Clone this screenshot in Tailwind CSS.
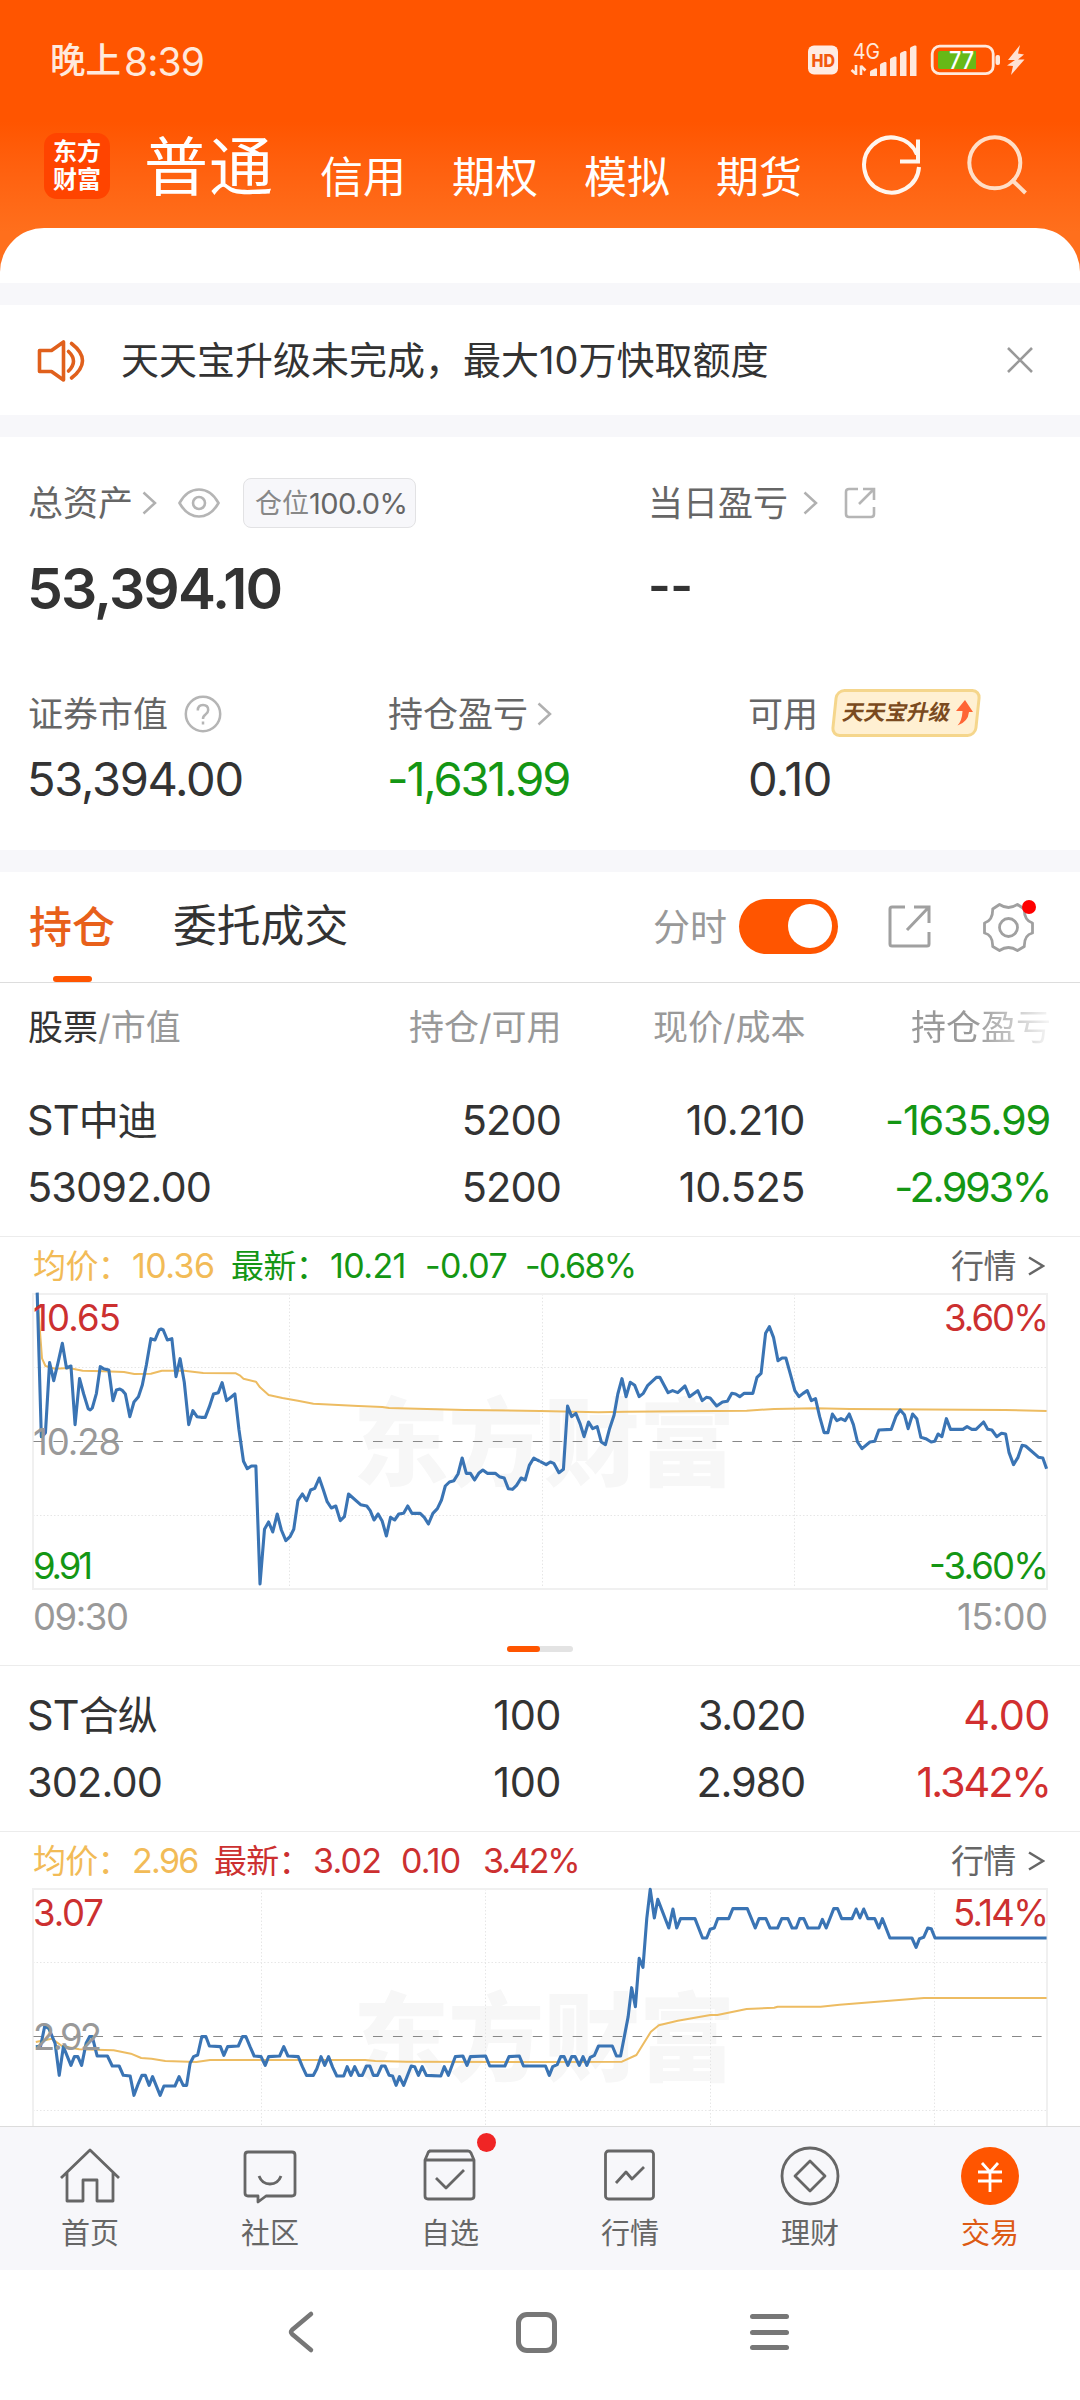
<!DOCTYPE html>
<html lang="zh-CN">
<head>
<meta charset="utf-8">
<title>交易</title>
<script src="https://cdn.jsdelivr.net/npm/@tailwindcss/browser@4"></script>
</head>
<body class="w-[1080px] h-[2400px] overflow-hidden bg-white text-[#333333] font-['Inter','Noto_Sans_CJK_SC',sans-serif] leading-none whitespace-nowrap">

<!-- header -->
<header class="h-[283px] bg-linear-to-b from-[#ff5500] from-[43%] to-[#ff6f1c] to-[82%]">
  <div class="h-[122px] flex items-center pl-[50px] text-[#ffe9dc]">
    <div class="flex items-center w-[758px]"><span class="text-[35.500px] font-medium">晚上</span><span class="text-[39px] tracking-[-0.9px] ml-[3px]">8:39</span></div>
    <svg class="w-[222px] h-[60px]" viewBox="808 32 222 60">
      <rect x="808" y="46.500" width="30" height="29" rx="6" fill="#ffece3"/>
      <text x="811.500" y="67.500" font-size="17.500" font-weight="800" fill="#f2590e" textLength="23.500" lengthAdjust="spacingAndGlyphs">HD</text>
      <text x="853" y="60" font-size="21.500" fill="#ffe9dc" textLength="27" lengthAdjust="spacingAndGlyphs">4G</text>
      <path d="M856 66v10M856 75l-4.500-4M861 76V66.500M861 67l4.500 4.500" stroke="#ffe9dc" stroke-width="2.600" fill="none"/>
      <path d="M870 77v-4q0-1 1-1.500l4-2q2-1 2 1v6.500zM880 77V66q0-1 1-1.500l3.500-1.500q2-.5 2 1v13zM890 77V60.500q0-1 1-1.500l3.500-1.500q2-.5 2 1v18.500zM900 77V55q0-1 1-1.500l3.500-1.500q2-.5 2 1v24zM910 77V49.500q0-1 1-1.500l3.500-1.500q2-.5 2 1v29.500z" fill="#ffe9dc"/>
      <rect x="932.200" y="47.200" width="61" height="27.500" rx="7.500" fill="none" stroke="#ffe9dc" stroke-width="2.800"/>
      <path d="M940 52h36v18h-36q-2 0-2-2V54q0-2 2-2z" fill="#66b917"/>
      <text x="949" y="69.800" font-size="24" font-weight="500" fill="#ffffff" textLength="25" lengthAdjust="spacingAndGlyphs">77</text>
      <rect x="995.500" y="56" width="4.500" height="10" rx="2" fill="#ffe9dc"/>
      <path d="M1020 46l-12 15h7l-8 5.500 6 .5-2 9 13.500-15.500h-6.500l6-5-6-1z" fill="#ffe1d2"/>
    </svg>
  </div>
  <div class="h-[106px] pb-[18px] flex items-center text-white">
    <div class="ml-[44px] w-[66px] h-[66px] rounded-[13px] bg-[#ff4400] flex flex-col items-center justify-center text-[24px] leading-[28px] font-bold"><span>东方</span><span>财富</span></div>
    <span class="ml-[34px] w-[176px] mt-[2px] text-[64px] tracking-[1px]">普通</span>
    <span class="mt-[23px] w-[132px] text-[43px]">信用</span>
    <span class="mt-[23px] w-[132px] text-[43px]">期权</span>
    <span class="mt-[23px] w-[132px] text-[43px]">模拟</span>
    <span class="mt-[23px] w-[132px] text-[43px]">期货</span>
    <svg class="ml-[12px] w-[64px] h-[64px]" viewBox="860 134 64 64" fill="none" stroke="#fff6ee" stroke-width="4">
      <path d="M919 167A27.500 27.500 0 1 1 917 154.500M918 139.500v22h-18"/>
    </svg>
    <svg class="ml-[42px] w-[64px] h-[64px]" viewBox="966 134 64 64" fill="none" stroke="#ffdec6" stroke-width="4">
      <circle cx="994.800" cy="162.800" r="25.500"/><path d="M1011.500 179.500l14 13.500"/>
    </svg>
  </div>
  <div class="h-[55px] bg-white rounded-t-[44px]"></div>
</header>

<!-- notice -->
<section class="h-[154px] border-y-[22px] border-[#f7f7fa] bg-white flex items-center">
  <svg class="mt-[2px] ml-[36px] w-[50px] h-[46px]" viewBox="36 338 50 46" fill="none" stroke="#e0601c" stroke-width="3.600" stroke-linecap="round" stroke-linejoin="round">
    <path d="M39.500 350.500h12l12-8.500v38l-12-8.500h-12zM68.500 351.500q10 9.500 0 19.500M71.500 343.500q22 17 0 34.500"/>
  </svg>
  <span class="ml-[35px] w-[886px] text-[38px]">天天宝升级未完成，最大10万快取额度</span>
  <svg class="w-[26px] h-[26px]" viewBox="0 0 26 26" stroke="#999999" stroke-width="2.600"><path d="M1 1l24 24M25 1L1 25"/></svg>
</section>

<!-- assets -->
<section class="h-[413px] pt-[40px]">
  <div class="h-[52px] flex items-center text-[#666666] text-[35px]">
    <span class="ml-[28px] w-[114px]">总资产</span>
    <svg class="w-[15px] h-[24px]" viewBox="0 0 15 24" fill="none" stroke="#b0b0b0" stroke-width="2.500"><path d="M1.500 1.500L13 12 1.500 22.500"/></svg>
    <svg class="ml-[21px] w-[42px] h-[30px]" viewBox="0 0 42 30" fill="none" stroke="#b5b5b5" stroke-width="2.600"><path d="M1.500 15Q9 1.500 21 1.500T40.500 15Q33 28.500 21 28.500T1.500 15z"/><circle cx="21" cy="15" r="6"/></svg>
    <div class="ml-[23px] w-[173px] h-[50px] rounded-[8px] bg-[#f7f7fa] border border-[#e2e2e4] pl-[11px] flex items-center text-[27px]"><span class="text-[#888888]">仓位</span><span class="text-[29px] tracking-[-0.600px]">100.0%</span></div>
    <span class="ml-[232px] w-[155px]">当日盈亏</span>
    <svg class="w-[15px] h-[24px]" viewBox="0 0 15 24" fill="none" stroke="#b0b0b0" stroke-width="2.500"><path d="M1.500 1.500L13 12 1.500 22.500"/></svg>
    <svg class="ml-[26px] w-[32px] h-[32px]" viewBox="0 0 32 32" fill="none" stroke="#b5b5b5" stroke-width="2.600"><path d="M14 2H5Q2 2 2 5v22q0 3 3 3h22q3 0 3-3v-7M19 2h11v11M29.500 2.500L15 17"/></svg>
  </div>
  <div class="mt-[29px] h-[60px] flex items-center text-[57px] font-semibold">
    <span class="ml-[27px] w-[621px] tracking-[-1.900px]">53,394.10</span><span class="mt-[-6px] text-[49px] tracking-[-0.500px]">--</span>
  </div>
  <div class="mt-[71px] h-[50px] flex items-center text-[#666666] text-[35px]">
    <span class="ml-[28px] w-[156px]">证券市值</span>
    <svg class="w-[38px] h-[38px]" viewBox="0 0 38 38" fill="none" stroke="#b5b5b5" stroke-width="2.500"><circle cx="19" cy="19" r="17.200"/><path d="M13.800 15.500q0-5.500 5.200-5.500t5.200 5q0 2.500-2.700 4.500T19 24"/><path d="M19 26.500v3"/></svg>
    <span class="ml-[166px] w-[149px]">持仓盈亏</span>
    <svg class="w-[15px] h-[24px]" viewBox="0 0 15 24" fill="none" stroke="#b0b0b0" stroke-width="2.500"><path d="M1.500 1.500L13 12 1.500 22.500"/></svg>
    <span class="ml-[196px] w-[83px]">可用</span>
    <div class="relative mt-[-2px] w-[150px] h-[48px] flex items-center">
      <div class="absolute inset-x-[2px] inset-y-0 -skew-x-6 rounded-[9px] border-[3px] border-[#f5d68c] bg-[#fff0d2]"></div>
      <span class="relative ml-[12px] w-[110px] -skew-x-12 text-[21.500px] font-bold text-[#7a4a20]">天天宝升级</span>
      <svg class="relative w-[22px] h-[28px]" viewBox="0 0 22 28"><path d="M12 1L20 13h-4q-1 10-11.500 13.500Q9 22 9.500 12H3z" fill="#ff6535"/></svg>
    </div>
  </div>
  <div class="mt-[14px] h-[50px] flex items-center text-[47px]">
    <span class="ml-[27px] w-[360px] tracking-[-1.300px]">53,394.00</span>
    <span class="w-[361px] tracking-[-2.200px] text-[#149614]">-1,631.99</span>
    <span class="tracking-[-0.800px]">0.10</span>
  </div>
</section>

<!-- tabs -->
<section class="h-[133px] border-t-[22px] border-t-[#f7f7fa] border-b border-b-[#dddddd] relative flex items-center">
  <span class="ml-[29px] w-[144px] text-[43px] font-medium text-[#e8601a]">持仓</span>
  <span class="w-[480px] text-[43.800px]">委托成交</span>
  <span class="w-[86px] text-[37px] text-[#999999]">分时</span>
  <div class="mb-[2px] w-[99px] h-[55px] rounded-full bg-[#ff5500] flex items-center justify-end pr-[6px]"><div class="w-[44px] h-[44px] rounded-full bg-white"></div></div>
  <svg class="mb-[1px] ml-[50px] w-[43px] h-[43px]" viewBox="0 0 43 43" fill="none" stroke="#a0a0a0" stroke-width="3"><path d="M17 2H4Q2 2 2 4v35q0 2 2 2h35q2 0 2-2V27M26 2h15v16M40 3L19 25"/></svg>
  <svg class="mb-[2px] ml-[51px] w-[54px] h-[58px]" viewBox="982 896 54 58" fill="none" stroke="#a0a0a0" stroke-width="2.800" stroke-linejoin="round">
    <circle cx="1008.500" cy="926.500" r="9"/>
    <path d="M999.500 903.500Q1008.500 909.500 1017.500 903.500L1024.300 908Q1024 919.500 1032.500 922V932Q1024 934 1024.300 945.500L1017.500 949.500Q1008.500 943.500 999.500 949.500L992.700 945.500Q993 934 984.500 932V922Q993 919.500 992.700 908z"/>
    <circle cx="1029" cy="906" r="7" fill="#ff0000" stroke="none"/>
  </svg>
  <div class="absolute left-[53px] bottom-0 w-[39px] h-[6px] rounded-full bg-[#ff5500]"></div>
</section>

<!-- column titles -->
<div class="h-[88px] flex items-center pl-[28px] text-[35px] text-[#999999]">
  <span class="w-[381px]"><span class="text-[#333333]">股票</span>/市值</span>
  <span class="w-[244px]">持仓/可用</span>
  <span class="w-[258px]">现价/成本</span>
  <span class="bg-linear-to-r from-[#999999] from-[45%] to-[#f4f4f4] to-[98%] bg-clip-text text-transparent">持仓盈亏</span>
</div>

<!-- holding 1 -->
<div class="h-[166px] pt-[16px] border-b border-[#ececec] text-[41.500px] leading-[66px] tracking-[-0.900px]">
  <div class="flex pl-[27px]"><span class="w-[250px]">ST<span class="text-[40px]">中迪</span></span><span class="w-[284px] text-right">5200</span><span class="w-[244px] text-right tracking-[-0.500px]">10.210</span><span class="w-[245px] text-right text-[#149614] tracking-[-1.200px]">-1635.99</span></div>
  <div class="flex pl-[27px]"><span class="w-[250px]">53092.00</span><span class="w-[284px] text-right">5200</span><span class="w-[244px] text-right tracking-[-0.500px]">10.525</span><span class="w-[245px] text-right text-[#149614] tracking-[-2.400px]">-2.993%</span></div>
</div>

<!-- chart 1 -->
<div class="h-[55px] pt-[3px] pl-[33px] flex items-center text-[34px] tracking-[-0.600px] text-[#149614]">
  <span class="w-[99px] text-[33px]  text-[#f2bb57]">均价：</span><span class="w-[99px] text-[#f2bb57]">10.36</span>
  <span class="w-[99px] text-[33px]">最新：</span><span class="w-[95px]">10.21</span><span class="w-[100px]">-0.07</span><span class="w-[426px] tracking-[-1.700px]">-0.68%</span>
  <span class="w-[77px] text-[33px] text-[#666666]">行情</span>
  <svg class="w-[17px] h-[20px]" viewBox="0 0 17 20" fill="none" stroke="#666666" stroke-width="2.500"><path d="M1 1.500L15 10 1 18.500"/></svg>
</div>
<svg class="block w-[1080px] h-[348px]" viewBox="0 1292 1080 348" fill="none">
  <g font-weight="900" font-size="96" fill="#f7f7f7"><text x="353" y="1478" textLength="382">东方财富</text></g>
  <path d="M289.500 1294v295M542.500 1294v295M794.500 1294v295M33 1367.500h1014M33 1515.500h1014" stroke="#e6e6e6" stroke-dasharray="1.500 2"/>
  <rect x="33" y="1294" width="1014" height="295" stroke="#f0f0f0" stroke-width="2"/>
  <path d="M33.500 1441.500H1046" stroke="#888888" stroke-width="1.200" stroke-dasharray="9.600 10.370"/>
  <g stroke-linejoin="round">
    <g stroke="#edbc62" stroke-width="2">
      <path vector-effect="non-scaling-stroke" transform="translate(0 1230) scale(.34439 .33333)" d="M108 190L118 330 122 385 132 408 160 416 200 414 240 422 300 424 360 426 390 432 438 431 470 422 535 422 590 429 685 430 696 436 707 446 743 455 755 472 780 495 820 504 865 512 910 521 1040 528 1110 531 1130 534 1350 540 1568 543"/>
      <path vector-effect="non-scaling-stroke" transform="translate(540 1230) scale(.34439 .33333)" d="M0 543L170 547 250 545 600 542 680 537 800 535 900 537 1350 540 1471 543"/>
    </g>
    <g stroke="#3a74b4" stroke-width="3.100">
      <path vector-effect="non-scaling-stroke" transform="translate(0 1230) scale(.34439 .33333)" d="M108 188L120 620 124 618 132 608 144 398 156 452 168 400 181 340 193 414 206 408 218 584 231 446 243 492 256 536 262 540 268 534 280 490 291 410 300 416 316 420 328 512 338 480 348 477 356 482 364 492 377 560 389 516 402 500 413 466 425 405 438 326 450 330 462 300 468 297 474 300 486 330 499 326 511 440 523 386 535 456 548 584 560 542 572 560 584 562 596 562 608 530 620 492 634 488 645 458 658 512 670 502 682 492 694 600 707 694 718 716 730 708 743 708 755 1062 768 898 780 876 792 906 805 852 817 900 830 932 842 920 853 898 865 812 878 792 890 812 902 780 914 775 927 744 939 780 950 815 962 834 975 828 988 872 1000 860 1012 792 1047 824 1065 828 1075 842 1086 870 1098 852 1110 874 1122 918 1134 862 1146 870 1158 852 1172 850 1184 828 1196 850 1220 850 1232 862 1244 882 1257 850 1270 836 1282 810 1293 768 1305 756 1318 752 1330 732 1342 684 1354 730 1366 730 1378 750 1390 730 1402 720 1415 730 1438 730 1450 740 1464 744 1476 776 1488 778 1500 766 1513 744 1525 750 1537 706 1550 684 1560 690 1568 694"/>
      <path vector-effect="non-scaling-stroke" transform="translate(540 1230) scale(.34439 .33333)" d="M0 694L18 704 30 696 40 700 55 728 68 718 80 528 92 560 104 550 116 580 128 620 141 576 153 596 166 590 178 636 190 644 202 596 215 556 226 492 238 446 250 500 262 457 275 466 288 500 300 490 313 466 338 442 348 442 372 488 385 482 400 488 421 468 434 500 458 482 471 512 483 502 494 504 513 528 530 516 544 514 557 490 568 492 580 500 593 490 618 490 630 442 642 430 655 310 666 290 678 322 691 392 703 384 714 384 728 436 740 482 752 500 764 490 776 482 788 512 800 506 812 560 825 608 836 608 849 552 862 572 874 566 886 572 898 552 910 584 922 636 935 656 958 636 972 634 984 600 1020 598 1034 558 1046 540 1058 554 1069 596 1082 552 1094 566 1106 622 1120 626 1136 636 1146 634 1156 612 1167 620 1180 566 1192 598 1228 598 1240 590 1254 598 1266 598 1288 576 1300 598 1312 600 1326 620 1340 610 1352 612 1362 668 1375 704 1388 682 1400 646 1410 648 1448 682 1460 684 1471 716"/>
    </g>
  </g>
  <g font-size="36.500">
    <text x="33" y="1331" fill="#cc3030" textLength="88">10.65</text><text x="33" y="1455" fill="#999999" textLength="88">10.28</text>
    <text x="33" y="1579" fill="#149614" textLength="60">9.91</text>
    <text x="944" y="1331" fill="#cc3030" textLength="105">3.60%</text><text x="929" y="1579" fill="#149614" textLength="120">-3.60%</text>
    <text x="33" y="1629.700" fill="#999999" textLength="96">09:30</text><text x="957" y="1629.700" fill="#999999" textLength="91">15:00</text>
  </g>
</svg>
<div class="h-[26px] pt-[6px] border-b border-[#ececec]">
  <div class="mx-auto w-[66px] h-[6px] rounded-full bg-[#e3e3e3]"><div class="w-[33px] h-[6px] rounded-full bg-[#ff5500]"></div></div>
</div>

<!-- holding 2 -->
<div class="h-[166px] pt-[16px] border-b border-[#ececec] text-[41.500px] leading-[66px] tracking-[-0.900px]">
  <div class="flex pl-[27px]"><span class="w-[250px]">ST<span class="text-[40px]">合纵</span></span><span class="w-[284px] text-right tracking-[-0.500px]">100</span><span class="w-[244px] text-right tracking-[-1.200px]">3.020</span><span class="w-[245px] text-right text-[#d12f2f] tracking-[-0.500px]">4.00</span></div>
  <div class="flex pl-[27px]"><span class="w-[250px]">302.00</span><span class="w-[284px] text-right tracking-[-0.500px]">100</span><span class="w-[244px] text-right tracking-[-1.200px]">2.980</span><span class="w-[245px] text-right text-[#d12f2f] tracking-[-2.100px]">1.342%</span></div>
</div>

<!-- chart 2 -->
<div class="h-[55px] pt-[3px] pl-[33px] flex items-center text-[34px] tracking-[-0.800px] text-[#cc3030]">
  <span class="w-[99px] text-[33px] text-[#f2bb57]">均价：</span><span class="w-[82px] tracking-[-1.700px] text-[#f2bb57]">2.96</span>
  <span class="w-[99px] text-[33px]">最新：</span><span class="w-[88px]">3.02</span><span class="w-[82px]">0.10</span><span class="w-[468px] tracking-[-2.100px]">3.42%</span>
  <span class="w-[77px] text-[33px] text-[#666666]">行情</span>
  <svg class="w-[17px] h-[20px]" viewBox="0 0 17 20" fill="none" stroke="#666666" stroke-width="2.500"><path d="M1 1.500L15 10 1 18.500"/></svg>
</div>
<svg class="block w-[1080px] h-[239px]" viewBox="0 1887 1080 239" fill="none">
  <g font-weight="900" font-size="96" fill="#f7f7f7"><text x="353" y="2073" textLength="382">东方财富</text></g>
  <path d="M261.500 1889v240M485.500 1889v240M710.500 1889v240M934.500 1889v240M33 1962.500h1014M33 2110.500h1014" stroke="#e6e6e6" stroke-dasharray="1.500 2"/>
  <rect x="33" y="1889" width="1014" height="295" stroke="#f0f0f0" stroke-width="2"/>
  <path d="M33.500 2036.500H1046" stroke="#888888" stroke-width="1.200" stroke-dasharray="9.600 10.370"/>
  <g stroke-linejoin="round">
    <g stroke="#edbc62" stroke-width="2">
      <path vector-effect="non-scaling-stroke" transform="translate(0 1840) scale(.34439 .33333)" d="M104 606L150 596 180 618 230 628 330 631 380 641 410 654 440 656 480 663 570 666 610 660 1060 660 1090 663 1180 665 1568 666"/>
      <path vector-effect="non-scaling-stroke" transform="translate(540 1840) scale(.34439 .33333)" d="M0 666L238 665 280 645 322 575 345 556 400 542 495 525 515 525 600 507 680 503 690 500 815 500 870 494 1115 474 1471 474"/>
    </g>
    <g stroke="#3a74b4" stroke-width="3.100">
      <path vector-effect="non-scaling-stroke" transform="translate(0 1840) scale(.34439 .33333)" d="M104 620L118 618 130 558 142 566 160 610 172 706 184 620 206 676 216 650 226 650 237 676 250 610 260 590 268 590 282 648 312 648 326 678 346 678 358 706 378 708 389 766 402 730 412 706 422 706 433 736 443 710 465 766 476 738 508 738 520 710 532 736 542 736 552 670 562 650 574 645 586 590 598 590 608 618 640 620 650 646 661 620 692 618 704 590 714 590 726 620 738 648 758 650 770 676 780 650 812 648 824 620 836 648 866 650 878 680 890 706 910 706 920 686 932 650 943 676 954 650 966 682 978 708 998 708 1008 680 1019 706 1030 680 1042 706 1052 706 1064 678 1074 678 1084 706 1096 706 1108 678 1118 678 1130 706 1140 708 1150 736 1160 710 1172 736 1194 678 1204 680 1215 706 1226 680 1238 706 1280 708 1290 680 1302 706 1322 650 1344 648 1356 676 1366 650 1410 648 1422 678 1466 678 1478 650 1508 648 1520 678 1568 678"/>
      <path vector-effect="non-scaling-stroke" transform="translate(540 1840) scale(.34439 .33333)" d="M0 678L16 678 27 706 37 680 50 674 60 650 70 650 81 676 92 650 102 650 114 676 125 650 136 676 146 652 158 646 170 618 210 618 222 648 234 648 256 530 266 443 277 500 288 355 299 382 310 236 320 148 332 234 342 178 374 264 386 207 397 264 408 236 450 236 472 294 484 294 494 268 506 264 516 236 548 236 560 206 602 206 614 236 625 264 636 236 656 236 668 264 690 264 702 236 720 236 732 264 744 264 754 236 766 236 778 264 810 264 820 238 831 264 853 206 864 206 876 236 906 236 918 207 929 234 940 207 952 236 972 236 984 264 994 236 1016 294 1080 294 1092 322 1102 296 1114 292 1126 264 1136 266 1147 294 1471 294"/>
    </g>
  </g>
  <g font-size="36.500">
    <text x="33" y="1926" fill="#cc3030" textLength="71">3.07</text><text x="33" y="2050" fill="#999999" textLength="69">2.92</text>
    <text x="953" y="1926" fill="#cc3030" textLength="96">5.14%</text>
  </g>
</svg>

<!-- tab bar -->
<nav class="h-[144px] bg-[#f7f7fa] border-t border-[#dcdcdc] grid grid-cols-6 justify-items-center text-[29px] text-[#666666]">
  <div class="flex flex-col items-center pt-[17px]">
    <svg class="w-[64px] h-[64px] mb-[11px]" viewBox="-32 -32 64 64" fill="none" stroke="#666666" stroke-width="2.800" stroke-linejoin="round"><path d="M-29 2L0-26 29 2M-23-3V25H-7V4H7V25H23V-3"/></svg><span>首页</span></div>
  <div class="flex flex-col items-center pt-[17px]">
    <svg class="w-[64px] h-[64px] mb-[11px]" viewBox="-32 -32 64 64" fill="none" stroke="#666666" stroke-width="2.800" stroke-linejoin="round"><path d="M-22-24H22Q25-24 25-21V17Q25 20 22 20H-4L-12 26V20H-22Q-25 20-25 17V-21Q-25-24-22-24zM-11 0Q-8 8 0 8T11 0"/></svg><span>社区</span></div>
  <div class="relative flex flex-col items-center pt-[17px]">
    <svg class="w-[64px] h-[64px] mb-[11px]" viewBox="-32 -32 64 64" fill="none" stroke="#666666" stroke-width="2.800" stroke-linejoin="round"><path d="M-21-25H18Q20-25 21-23L24-16V20Q24 23 21 23H-22Q-25 23-25 20V-16L-22-23Q-21.500-25-19-25M-25-16H24M-14 2L-4 12 14-6"/></svg><span>自选</span>
    <div class="absolute left-[59px] top-[6px] w-[19px] h-[19px] rounded-full bg-[#f02525]"></div></div>
  <div class="flex flex-col items-center pt-[17px]">
    <svg class="w-[64px] h-[64px] mb-[11px]" viewBox="-32 -32 64 64" fill="none" stroke="#666666" stroke-width="2.800" stroke-linejoin="round"><rect x="-24.500" y="-25" width="48" height="48" rx="3"/><path d="M-14 7L-4-4 2 3 14-9"/></svg><span>行情</span></div>
  <div class="flex flex-col items-center pt-[17px]">
    <svg class="w-[64px] h-[64px] mb-[11px]" viewBox="-32 -32 64 64" fill="none" stroke="#666666" stroke-width="2.800" stroke-linejoin="round"><circle r="28"/><path d="M0-15L15 0 0 15-15 0z"/></svg><span>理财</span></div>
  <div class="flex flex-col items-center pt-[17px]">
    <svg class="w-[64px] h-[64px] mb-[11px]" viewBox="-32 -32 64 64" fill="none" stroke="#ffffff" stroke-width="2.800"><circle r="29" fill="#ff5500" stroke="none"/><path d="M-8-13L0-4 8-13M0-4V16M-12-4H12M-12 5H12"/></svg><span class="text-[#dd5a14]">交易</span></div>
</nav>

<!-- system navigation -->
<div class="h-[130px] pb-[6px] flex items-center">
  <svg class="ml-[286px] w-[29px] h-[44px]" viewBox="0 0 29 44" fill="none" stroke="#777777" stroke-width="4.500" stroke-linecap="round"><path d="M25 4L6 20Q4 22 6 24L25 40"/></svg>
  <div class="ml-[201px] w-[41px] h-[41px] rounded-[11px] border-[5px] border-[#777777]"></div>
  <div class="ml-[193px] w-[39px] h-[36px] flex flex-col justify-between"><div class="h-[5px] rounded-full bg-[#777777]"></div><div class="h-[5px] rounded-full bg-[#777777]"></div><div class="h-[5px] rounded-full bg-[#777777]"></div></div>
</div>
</body>
</html>
